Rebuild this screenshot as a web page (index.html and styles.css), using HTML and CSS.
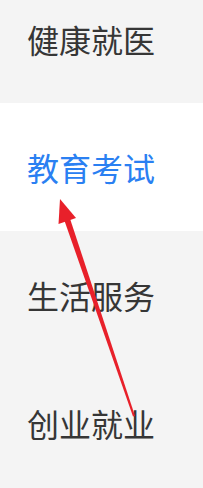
FILE: index.html
```html
<!DOCTYPE html>
<html lang="zh-CN">
<head>
    <meta charset="UTF-8">
    <meta name="viewport" content="width=device-width, initial-scale=1.0">
    <title>分类</title>
    <link rel="stylesheet" href="styles.css">
</head>
<body>
    <div class="page">
        <ul class="category-list">
            <li class="category-item">健康就医</li>
            <li class="category-item active">教育考试</li>
            <li class="category-item">生活服务</li>
            <li class="category-item">创业就业</li>
        </ul>

        <!-- annotation arrow pointing at the selected item -->
        <svg class="annotation" width="203" height="488" viewBox="0 0 203 488">
            <polygon points="64.2,220 69.8,218 135,416 133,416.6" fill="#e8202a"/>
            <polygon points="60,199 76,218 58.5,224" fill="#e8202a"/>
        </svg>
    </div>
</body>
</html>
```

FILE: styles.css
```css
:root {
    --bg: #f4f4f4;
    --text: #363636;
    --primary: #2a80f2;
}

* {
    margin: 0;
    padding: 0;
    box-sizing: border-box;
}

body {
    background: var(--bg);
    font-family: "Noto Sans CJK SC", "Noto Sans", sans-serif;
    overflow: hidden;
}

.page {
    position: relative;
    width: 203px;
    height: 488px;
    overflow: hidden;
}

/* list is scrolled a little, first row is partly hidden */
.category-list {
    list-style: none;
    margin-top: -25px;
}

.category-item {
    height: 128px;
    display: flex;
    align-items: center;
    padding-left: 27px;
    font-size: 32px;
    color: var(--text);
    background: var(--bg);
}

.category-item.active {
    background: #ffffff;
    color: var(--primary);
}

.annotation {
    position: absolute;
    top: 0;
    left: 0;
}
```
